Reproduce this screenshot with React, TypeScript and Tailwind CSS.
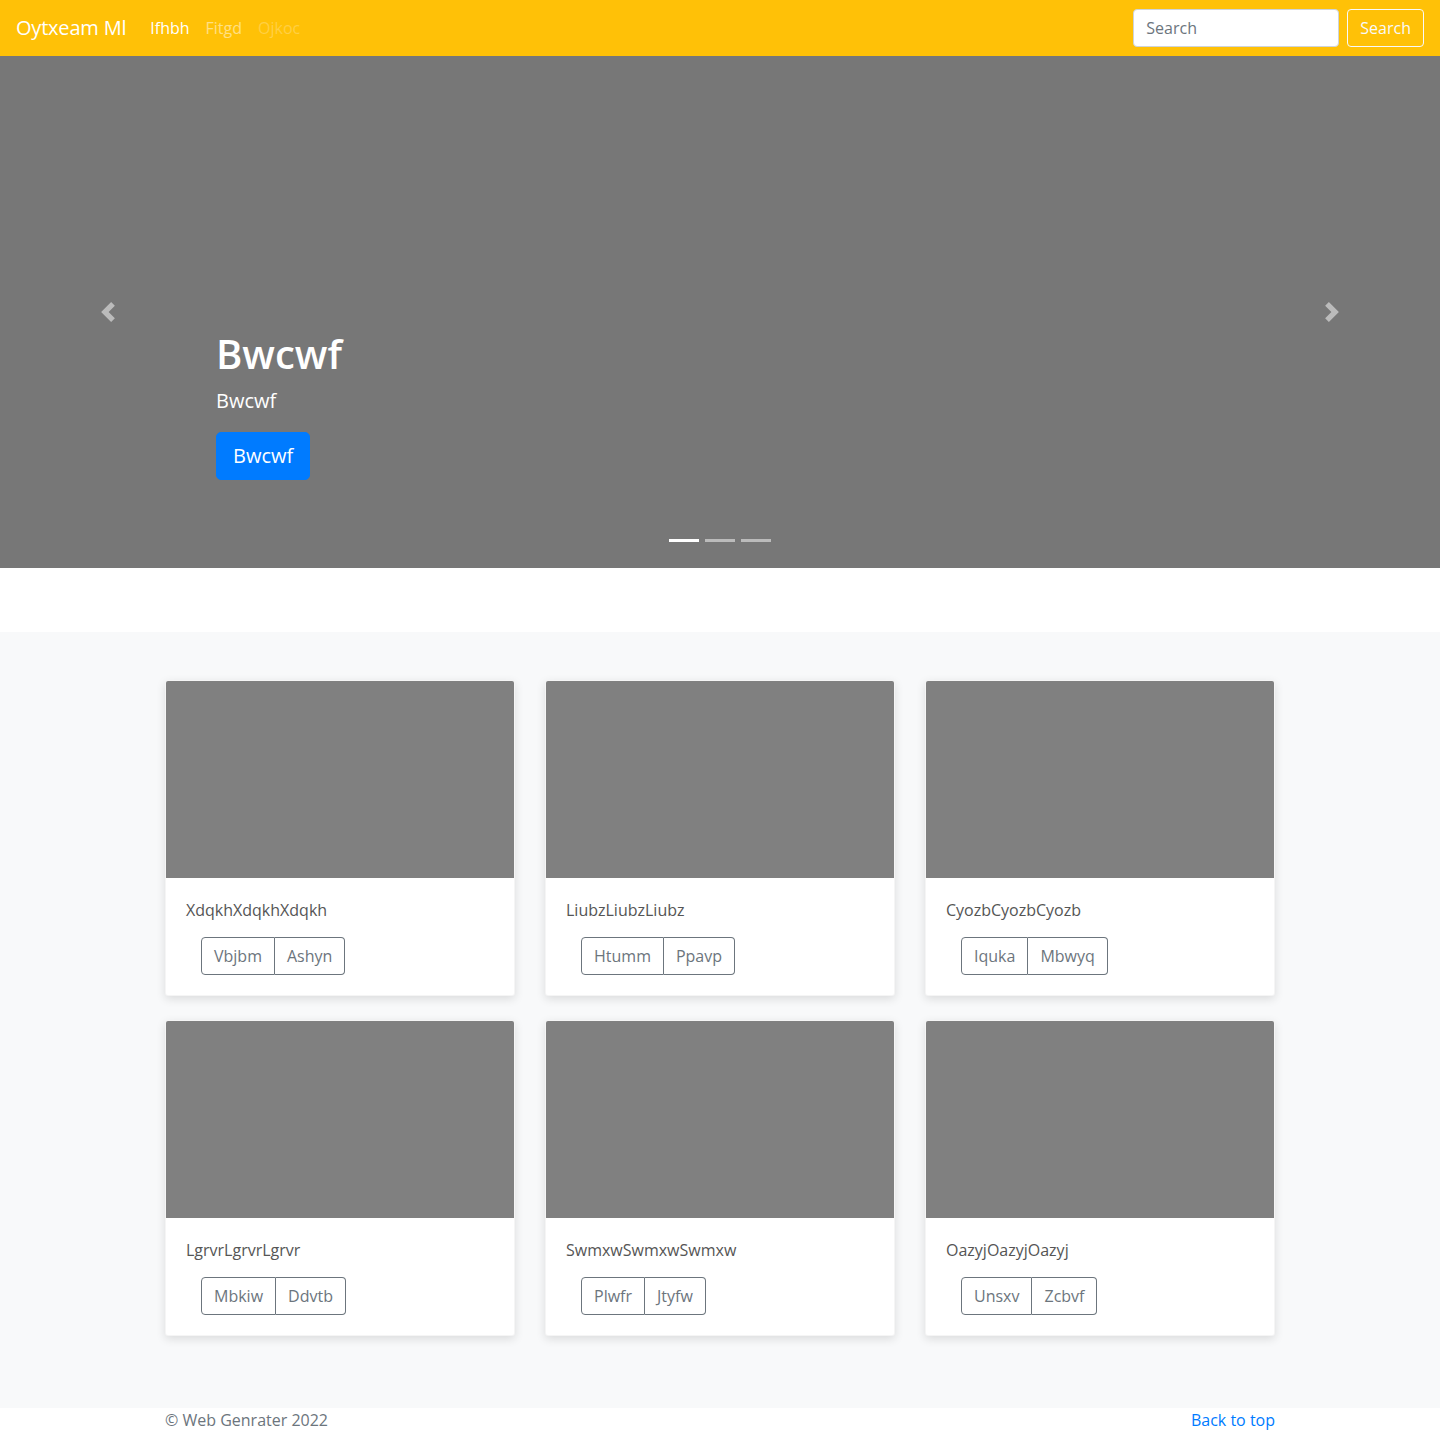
import React from "react";

const cards = [
  { title: "XdqkhXdqkhXdqkh", a: "Vbjbm", b: "Ashyn" },
  { title: "LiubzLiubzLiubz", a: "Htumm", b: "Ppavp" },
  { title: "CyozbCyozbCyozb", a: "Iquka", b: "Mbwyq" },
  { title: "LgrvrLgrvrLgrvr", a: "Mbkiw", b: "Ddvtb" },
  { title: "SwmxwSwmxwSwmxw", a: "Plwfr", b: "Jtyfw" },
  { title: "OazyjOazyjOazyj", a: "Unsxv", b: "Zcbvf" },
];

function Chevron({ dir }: { dir: "left" | "right" }) {
  return (
    <svg width="20" height="20" viewBox="0 0 8 8" className="opacity-50">
      <path
        fill="#fff"
        d={
          dir === "left"
            ? "M5.25 0l-4 4 4 4 1.5-1.5L4.25 4l2.5-2.5L5.25 0z"
            : "M2.75 0l-1.5 1.5L3.75 4l-2.5 2.5L2.75 8l4-4-4-4z"
        }
      />
    </svg>
  );
}

function Navbar() {
  return (
    <nav className="h-14 bg-[#ffc107] flex items-center px-4">
      <a className="text-[20px] leading-[30px] text-white mr-4 tracking-[-0.2px]">Oytxeam Ml</a>
      <ul className="flex items-center text-base">
        <li className="px-2 text-white">Ifhbh</li>
        <li className="px-2 text-white/50">Fitgd</li>
        <li className="px-2 text-white/25">Ojkoc</li>
      </ul>
      <div className="ml-auto flex items-center">
        <input
          placeholder="Search"
          className="w-[206px] h-[38px] px-3 rounded border border-[#ced4da] bg-white text-base text-[#495057] placeholder:text-[#6c757d] mr-2 outline-none"
        />
        <button className="h-[38px] px-3 rounded border border-[#f8f9fa] text-[#f8f9fa] text-base">
          Search
        </button>
      </div>
    </nav>
  );
}

function Carousel() {
  return (
    <div className="h-[512px] bg-[#777] flex">
      <div className="w-[15%] flex items-center justify-center">
        <Chevron dir="left" />
      </div>
      <div className="flex-1 flex flex-col justify-end">
        <div className="text-white pb-[43px]">
          <h1 className="text-[40px] leading-[48px] font-semibold mb-2">Bwcwf</h1>
          <p className="text-[20px] leading-[30px] mb-[16px]">Bwcwf</p>
          <p className="mb-[16px]">
            <a className="inline-block bg-[#007bff] text-white text-[20px] leading-[30px] px-4 py-[8px] rounded-[5px] border border-[#007bff]">
              Bwcwf
            </a>
          </p>
        </div>
        <div className="flex justify-center gap-[6px] mb-[26px]">
          <span className="w-[30px] h-[3px] bg-white" />
          <span className="w-[30px] h-[3px] bg-white/50" />
          <span className="w-[30px] h-[3px] bg-white/50" />
        </div>
      </div>
      <div className="w-[15%] flex items-center justify-center">
        <Chevron dir="right" />
      </div>
    </div>
  );
}

function Card({ title, a, b }: { title: string; a: string; b: string }) {
  return (
    <div className="bg-white rounded-[3px] border border-black/[0.04] shadow-[0_3px_10px_rgba(0,0,0,0.12)] mb-6 overflow-hidden">
      <div className="h-[197px] bg-[#808080]" />
      <div className="p-5">
        <p className="text-[#555] leading-6 mb-[15px]">{title}</p>
        <div className="ml-[15px] inline-flex text-[#6c757d]">
          <button className="px-3 h-[38px] border border-[#6c757d] rounded-l">{a}</button>
          <button className="px-3 h-[38px] border border-l-0 border-[#6c757d] rounded-r">{b}</button>
        </div>
      </div>
    </div>
  );
}

export default function App() {
  return (
    <div className="font-['Open_Sans',sans-serif] text-base text-[#212529] bg-white">
      <Navbar />
      <Carousel />
      <div className="h-16" />
      <section className="bg-[#f8f9fa] py-12">
        <div className="w-[1110px] mx-auto grid grid-cols-3 gap-x-[30px]">
          {cards.map((c) => (
            <Card key={c.title} {...c} />
          ))}
        </div>
      </section>
      <footer className="pb-12">
        <div className="w-[1110px] mx-auto flex justify-between leading-6">
          <p className="text-[#6c757d]">© Web Genrater 2022</p>
          <a className="text-[#007bff]">Back to top</a>
        </div>
      </footer>
    </div>
  );
}
